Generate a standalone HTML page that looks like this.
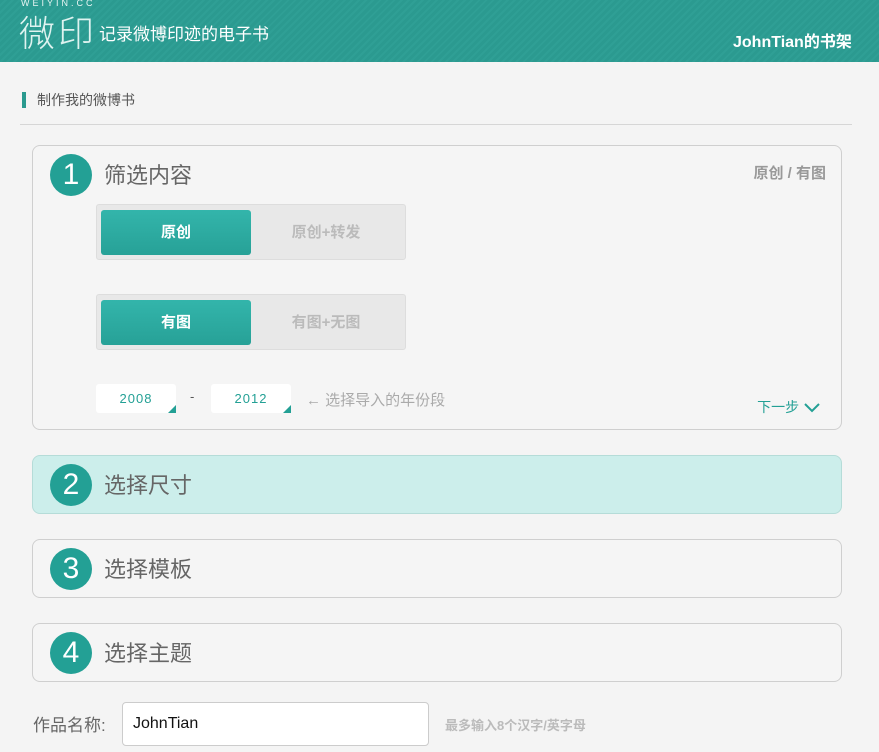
<!DOCTYPE html>
<html><head><meta charset="utf-8"><style>
*{margin:0;padding:0;box-sizing:border-box}
body{width:879px;height:752px;background:#f4f4f4;font-family:"Liberation Sans","Noto Sans CJK SC",sans-serif;position:relative;overflow:hidden}
.hd{position:absolute;left:0;top:0;width:879px;height:62px;background:repeating-linear-gradient(135deg,#2b9a90 0 3px,#2f9f95 3px 5px)}
.a{position:absolute}
.logo{left:19px;top:12px;font-size:36px;color:#dff3f0;line-height:44px;letter-spacing:3px;font-weight:300}
.small{left:21px;top:-2px;font-size:9px;color:#e8f5f3;letter-spacing:3px}
.slogan{left:99px;top:20px;font-size:17px;color:#fff}
.shelf{left:733px;top:28px;font-size:16px;color:#fff;font-weight:bold}
.sec{left:22px;top:92px;border-left:4px solid #2a9a8f;padding-left:11px;font-size:14px;color:#555;line-height:16px}
.line{left:20px;top:124px;width:832px;height:1px;background:#d6d6d6}
.pn{position:absolute;left:32px;width:810px;border:1px solid #cfcfcf;border-radius:8px;background:#f5f5f5}
.num{position:absolute;left:17px;width:42px;height:42px;border-radius:50%;background:#23a095;color:#fff;font-size:30px;text-align:center;line-height:42px}
.tt{position:absolute;left:71px;font-size:22px;color:#666}
.tg{position:absolute;left:96px;width:310px;height:56px;background:#e8e8e8;border:1px solid #ddd;border-radius:3px}
.on{position:absolute;left:4px;top:5px;width:150px;height:45px;border-radius:3px;background:linear-gradient(#33b5ab,#27a197);color:#fff;font-weight:bold;font-size:15px;text-align:center;line-height:45px}
.off{position:absolute;left:154px;top:5px;width:150px;height:45px;color:#bbb;font-weight:bold;font-size:15px;text-align:center;line-height:45px}
.yr{position:absolute;top:384px;width:80px;height:29px;background:#fff;border-radius:3px;color:#23a095;font-size:13px;text-align:center;line-height:29px;letter-spacing:1px}
.yr:after{content:"";position:absolute;right:0;bottom:0;border:4px solid transparent;border-right-color:#23a095;border-bottom-color:#23a095}
</style></head><body>
<div class="hd"></div>
<div class="a small">WEIYIN.CC</div>
<div class="a logo">微印</div>
<div class="a slogan">记录微博印迹的电子书</div>
<div class="a shelf">JohnTian的书架</div>
<div class="a sec">制作我的微博书</div>
<div class="a line"></div>

<div class="pn" style="top:145px;height:285px">
<div class="num" style="top:8px">1</div>
<div class="tt" style="top:12px">筛选内容</div>
<div class="a" style="right:15px;top:16px;font-size:15px;color:#999;font-weight:bold">原创 / 有图</div>
<div class="a" style="right:20px;top:251px;font-size:14px;color:#23a095">下一步 <svg width="18" height="12" viewBox="0 0 18 12" style="vertical-align:-1px"><path d="M2 3l7 7 7-7" fill="none" stroke="#23a095" stroke-width="2"/></svg></div>
</div>
<div class="tg" style="top:204px"><div class="on">原创</div><div class="off">原创+转发</div></div>
<div class="tg" style="top:294px"><div class="on">有图</div><div class="off">有图+无图</div></div>
<div class="yr" style="left:96px">2008</div>
<div class="a" style="left:190px;top:389px;color:#555;font-size:13px">-</div>
<div class="yr" style="left:211px">2012</div>
<div class="a" style="left:306px;top:389px;color:#aaa;font-size:15px">← 选择导入的年份段</div>

<div class="pn" style="top:455px;height:59px;background:#cceeeb;border-color:#b5dcd8">
<div class="num" style="top:8px">2</div><div class="tt" style="top:12px">选择尺寸</div></div>
<div class="pn" style="top:539px;height:59px">
<div class="num" style="top:8px">3</div><div class="tt" style="top:12px">选择模板</div></div>
<div class="pn" style="top:623px;height:59px">
<div class="num" style="top:8px">4</div><div class="tt" style="top:12px">选择主题</div></div>

<div class="a" style="left:33px;top:711px;font-size:17px;color:#666">作品名称:</div>
<div class="a" style="left:122px;top:702px;width:307px;height:44px;background:#fff;border:1px solid #ccc;border-radius:4px;padding-left:10px;line-height:42px;font-size:16px;color:#111">JohnTian</div>
<div class="a" style="left:445px;top:715px;font-size:13px;color:#bbb;font-weight:bold">最多输入8个汉字/英字母</div>
</body></html>
